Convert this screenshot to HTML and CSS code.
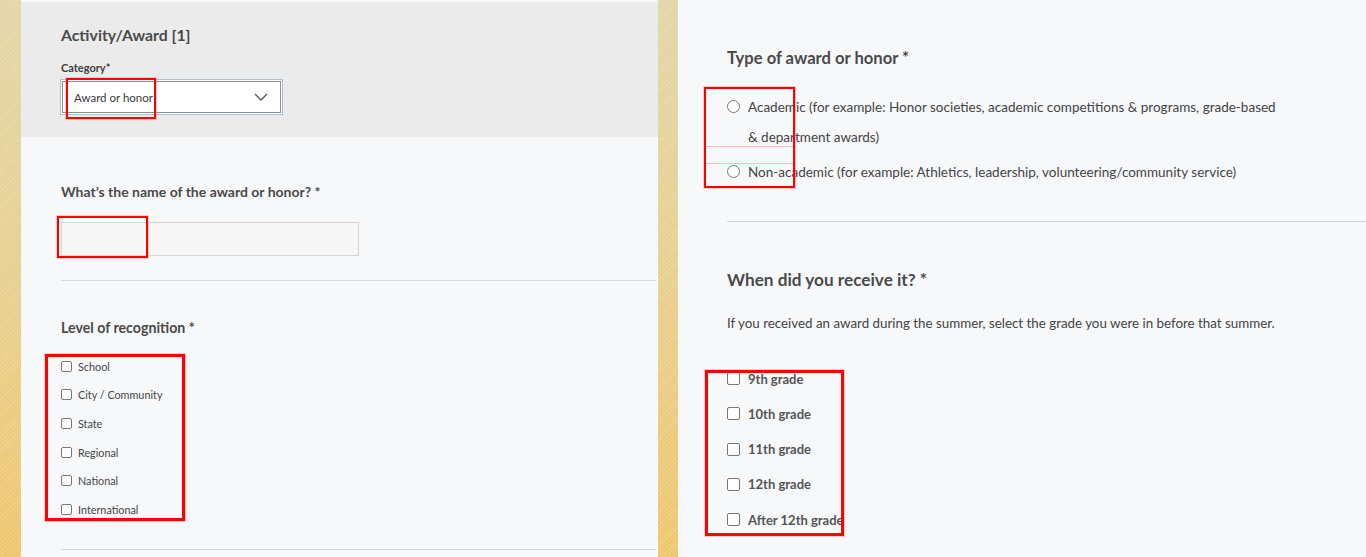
FILE: index.html
```html
<!DOCTYPE html>
<html lang="en">
<head>
<meta charset="utf-8">
<title>Activity/Award</title>
<link rel="stylesheet" href="styles.css">
</head>
<body>
<div class="page">
  <section class="panel panel-left">
    <div class="header">
      <h2 class="title">Activity/Award [1]</h2>
      <div class="field-label">Category*</div>
      <div class="select">
        <span class="select-value">Award or honor</span>
        <svg class="chevron" width="14" height="8" viewBox="0 0 14 8"><polyline points="1,1 7,7 13,1" fill="none" stroke="#555" stroke-width="1.3"/></svg>
      </div>
    </div>
    <div class="left-body">
      <div class="question q-name">What’s the name of the award or honor? *</div>
      <div class="text-input"></div>
      <div class="divider d1"></div>
      <div class="question q-level">Level of recognition *</div>
      <ul class="checks checks-small">
        <li><span class="box"></span>School</li>
        <li><span class="box"></span>City / Community</li>
        <li><span class="box"></span>State</li>
        <li><span class="box"></span>Regional</li>
        <li><span class="box"></span>National</li>
        <li><span class="box"></span>International</li>
      </ul>
      <div class="divider d2"></div>
    </div>
    <div class="mark mark-select"></div>
    <div class="mark mark-input"></div>
    <div class="mark mark-thick mark-levels"></div>
  </section>

  <section class="panel panel-right">
    <h3 class="heading h-type">Type of award or honor *</h3>
    <ul class="radios">
      <li><span class="circle"></span><span class="radio-text">Academic (for example: Honor societies, academic competitions &amp; programs, grade-based &amp; department awards)</span></li>
      <li><span class="circle"></span><span class="radio-text">Non-academic (for example: Athletics, leadership, volunteering/community service)</span></li>
    </ul>
    <div class="divider divider-right"></div>
    <h3 class="heading h-when">When did you receive it? *</h3>
    <p class="help">If you received an award during the summer, select the grade you were in before that summer.</p>
    <ul class="checks checks-large">
      <li><span class="box"></span>9th grade</li>
      <li><span class="box"></span>10th grade</li>
      <li><span class="box"></span>11th grade</li>
      <li><span class="box"></span>12th grade</li>
      <li><span class="box"></span>After 12th grade</li>
    </ul>
    <div class="mark mark-radios">
      <span class="ghost ghost-1"></span>
      <span class="ghost ghost-2"></span>
    </div>
    <div class="mark mark-thick mark-grades"></div>
  </section>
</div>
</body>
</html>
```

FILE: styles.css
```css
* { box-sizing: border-box; }

html, body {
  margin: 0;
  padding: 0;
}

body {
  width: 1366px;
  height: 557px;
  overflow: hidden;
  font-family: Lato, "Open Sans", "Liberation Sans", sans-serif;
  color: #4a4a4a;
  background:
    repeating-linear-gradient(135deg, rgba(255,255,255,0.16) 0 1px, rgba(255,255,255,0) 1px 3px),
    linear-gradient(to bottom, #e2d6a8 0%, #e8cf8f 50%, #efc66e 100%);
}

.page {
  display: flex;
  gap: 20px;
  padding-left: 21px;
  height: 557px;
}

.panel {
  position: relative;
  background: #f7f8fa;
  height: 557px;
}

.panel-left {
  width: 637px;
  padding-top: 2px;
}

.panel-right {
  flex: 1;
  padding: 48px 0 0 49px;
}

/* ---------- left header ---------- */
.header {
  height: 135px;
  background: #ebebeb;
  padding: 24px 0 0 40px;
}

.title {
  margin: 0;
  font-size: 15.8px;
  line-height: 18px;
  font-weight: 700;
  color: #4a4a4a;
}

.field-label {
  margin-top: 17px;
  font-size: 11px;
  line-height: 14px;
  font-weight: 700;
  color: #3e3e3e;
}

.select {
  margin: 6px 0 0 1px;
  width: 219px;
  height: 32px;
  background: #fff;
  border: 1px solid #8e8e8e;
  box-shadow: 0 0 0 1px #fff, 0 0 0 2px #a9bfd6;
  display: flex;
  align-items: center;
  justify-content: space-between;
  padding: 0 12px 0 11px;
}

.select-value {
  font-size: 11.5px;
  color: #3a3a3a;
}

.chevron { display: block; }

/* ---------- left body ---------- */
.left-body {
  padding: 46px 2px 0 40px;
}

.question {
  font-size: 14px;
  line-height: 17px;
  font-weight: 700;
  color: #4a4a4a;
}

.q-level { font-size: 14.2px; }

.text-input {
  margin-top: 22px;
  width: 298px;
  height: 34px;
  border: 1px solid #d4d4d4;
  background: #f6f6f6;
}

.divider {
  height: 0;
  border-top: 1px solid #d5d6da;
}

.d1 { margin-top: 24px; }
.q-level { margin-top: 38px; }
.d2 { margin-top: 25px; }

.checks {
  list-style: none;
  margin: 0;
  padding: 0;
}

.checks li {
  display: flex;
  align-items: center;
}

.checks-small {
  margin-top: 16px;
  font-size: 10.8px;
  color: #444;
}

.checks-small li {
  height: 28.67px;
}

.checks-small .box {
  width: 11px;
  height: 11px;
  margin-right: 6px;
  border: 1px solid #777;
  border-radius: 2px;
  background: #fff;
}

/* ---------- right panel ---------- */
.heading {
  margin: 0;
  font-size: 16.6px;
  line-height: 20px;
  font-weight: 700;
  color: #4a4a4a;
}

.h-when { font-size: 17.2px; }

.radios {
  list-style: none;
  margin: 24px 0 0 0;
  padding: 0;
}

.radios li {
  display: flex;
  align-items: flex-start;
  font-size: 13.5px;
  line-height: 30px;
  color: #444;
}

.radios li + li { margin-top: 5px; }

.circle {
  flex: none;
  width: 13px;
  height: 13px;
  margin: 8px 8px 0 0;
  border: 1px solid #777;
  border-radius: 50%;
  background: #fff;
}

.radio-text {
  max-width: 535px;
}

.divider-right {
  margin-top: 34px;
  border-top-color: #d2d3d7;
}

.h-when { margin-top: 48px; }

.help {
  margin: 25px 0 0 0;
  font-size: 13.35px;
  line-height: 16px;
  color: #444;
}

.checks-large {
  margin-top: 30px;
  font-size: 13px;
  font-weight: 700;
  color: #555;
}

.checks-large li {
  height: 35.25px;
}

.checks-large .box {
  width: 13px;
  height: 13px;
  margin-right: 8px;
  border: 1px solid #777;
  border-radius: 2px;
  background: #fff;
}

/* ---------- red annotation marks ---------- */
.mark {
  position: absolute;
  border: 2px solid #ff0000;
  box-shadow: 0 0 0 1px rgba(255,120,120,0.35);
}

.mark-thick { border-width: 3px; }

.mark-select { left: 45px; top: 78px; width: 90px; height: 41px; }
.mark-input { left: 36px; top: 216px; width: 91px; height: 42px; }
.mark-levels { left: 24px; top: 354px; width: 140px; height: 167px; }

.mark-radios { left: 26px; top: 87px; width: 91px; height: 101px; }
.mark-grades { left: 27px; top: 370px; width: 139px; height: 166px; }

.ghost {
  position: absolute;
  left: 0;
  right: 0;
  height: 1px;
  background: rgba(255, 110, 110, 0.45);
}

.ghost-1 { top: 57px; }
.ghost-2 { top: 74px; }
```
